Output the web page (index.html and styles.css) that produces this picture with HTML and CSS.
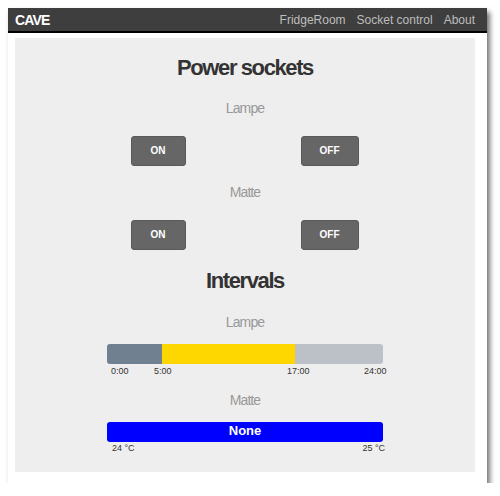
FILE: index.html
```html
<!DOCTYPE html>
<html>
<head>
<meta charset="utf-8">
<link rel="stylesheet" href="styles.css">
</head>
<body>
<div class="frame">
  <nav class="navbar">
    <span class="brand">CAVE</span>
    <div class="links">
      <a class="link">FridgeRoom</a>
      <a class="link">Socket control</a>
      <a class="link">About</a>
    </div>
  </nav>
  <main class="panel">
    <h1 class="title title-first">Power sockets</h1>
    <div class="label label-first">Lampe</div>
    <div class="btn-row">
      <button class="btn">ON</button>
      <button class="btn">OFF</button>
    </div>
    <div class="label label-next">Matte</div>
    <div class="btn-row">
      <button class="btn">ON</button>
      <button class="btn">OFF</button>
    </div>
    <h1 class="title title-second">Intervals</h1>
    <div class="label label-interval">Lampe</div>
    <div class="bar">
      <div class="seg seg-off" style="width:55px"></div>
      <div class="seg seg-on" style="width:133px"></div>
      <div class="seg seg-rest" style="width:88px"></div>
    </div>
    <div class="ticks">
      <span class="tick" style="left:4px">0:00</span>
      <span class="tick" style="left:47px">5:00</span>
      <span class="tick" style="left:180px">17:00</span>
      <span class="tick" style="left:257px">24:00</span>
    </div>
    <div class="label label-matte2">Matte</div>
    <div class="bar bar-blue">None</div>
    <div class="temps">
      <span>24 °C</span>
      <span>25 °C</span>
    </div>
  </main>
</div>
</body>
</html>
```
FILE: styles.css
```css
html, body {
  margin: 0;
  padding: 0;
  background: #ffffff;
}
body {
  font-family: "Liberation Sans", Arial, sans-serif;
}
.frame {
  margin: 8px 0 0 8px;
  width: 479px;
  height: 475px;
  background: #ffffff;
  box-shadow: 3px 4px 5px rgba(0, 0, 0, 0.55);
  display: flex;
  flex-direction: column;
}
.navbar {
  height: 23px;
  background: #3e3e3e;
  border-bottom: 2px solid #000000;
  display: flex;
  align-items: center;
  justify-content: space-between;
  padding: 0 12px 0 7px;
}
.brand {
  color: #ffffff;
  font-weight: bold;
  font-size: 14px;
  letter-spacing: -0.8px;
  line-height: 16px;
  margin-top: 1px;
}
.links {
  display: flex;
  gap: 11px;
}
.link {
  color: #bdbdbd;
  font-size: 12px;
  line-height: 14px;
  margin-top: 1px;
}
.panel {
  margin: 5px 12px 11px 7px;
  flex: 1;
  background: #eeeeee;
  display: flex;
  flex-direction: column;
  align-items: center;
}
.title {
  margin: 0;
  font-size: 22px;
  line-height: 26px;
  font-weight: bold;
  color: #333333;
  letter-spacing: -1.4px;
}
.title-first { margin-top: 17px; }
.title-second { margin-top: 18px; }
.label {
  font-size: 14px;
  line-height: 16px;
  color: #999999;
  letter-spacing: -0.9px;
}
.label-first { margin-top: 19px; }
.label-next { margin-top: 18px; }
.label-interval { margin-top: 20px; }
.label-matte2 { margin-top: 15px; }
.btn-row {
  display: flex;
  gap: 115px;
  margin-top: 20px;
  margin-right: 1px;
}
.btn {
  height: 30px;
  padding: 0 19px;
  background: #666666;
  border: 1px solid #595959;
  border-radius: 3px;
  color: #ffffff;
  font-family: "Liberation Sans", Arial, sans-serif;
  font-weight: bold;
  font-size: 10px;
  line-height: 12px;
}
.btn + .btn {
  padding: 0 18px;
}
.bar {
  margin-top: 14px;
  width: 276px;
  height: 20px;
  border-radius: 3px;
  overflow: hidden;
  display: flex;
}
.seg { height: 100%; }
.seg-off { background: #708090; }
.seg-on { background: #ffd700; }
.seg-rest { background: #bcc1c7; }
.ticks {
  position: relative;
  width: 276px;
  height: 11px;
  margin-top: 2px;
}
.tick {
  position: absolute;
  top: 0;
  font-size: 9px;
  line-height: 11px;
  color: #333333;
  white-space: nowrap;
}
.bar-blue {
  margin-top: 14px;
  background: #0000ff;
  color: #ffffff;
  font-weight: bold;
  font-size: 13px;
  justify-content: center;
  height: 20px;
  line-height: 18px;
}
.temps {
  width: 276px;
  box-sizing: border-box;
  padding: 0 0 0 3px;
  margin-right: -4px;
  display: flex;
  justify-content: space-between;
  font-size: 9px;
  line-height: 11px;
  color: #333333;
  margin-top: 1px;
}
```
